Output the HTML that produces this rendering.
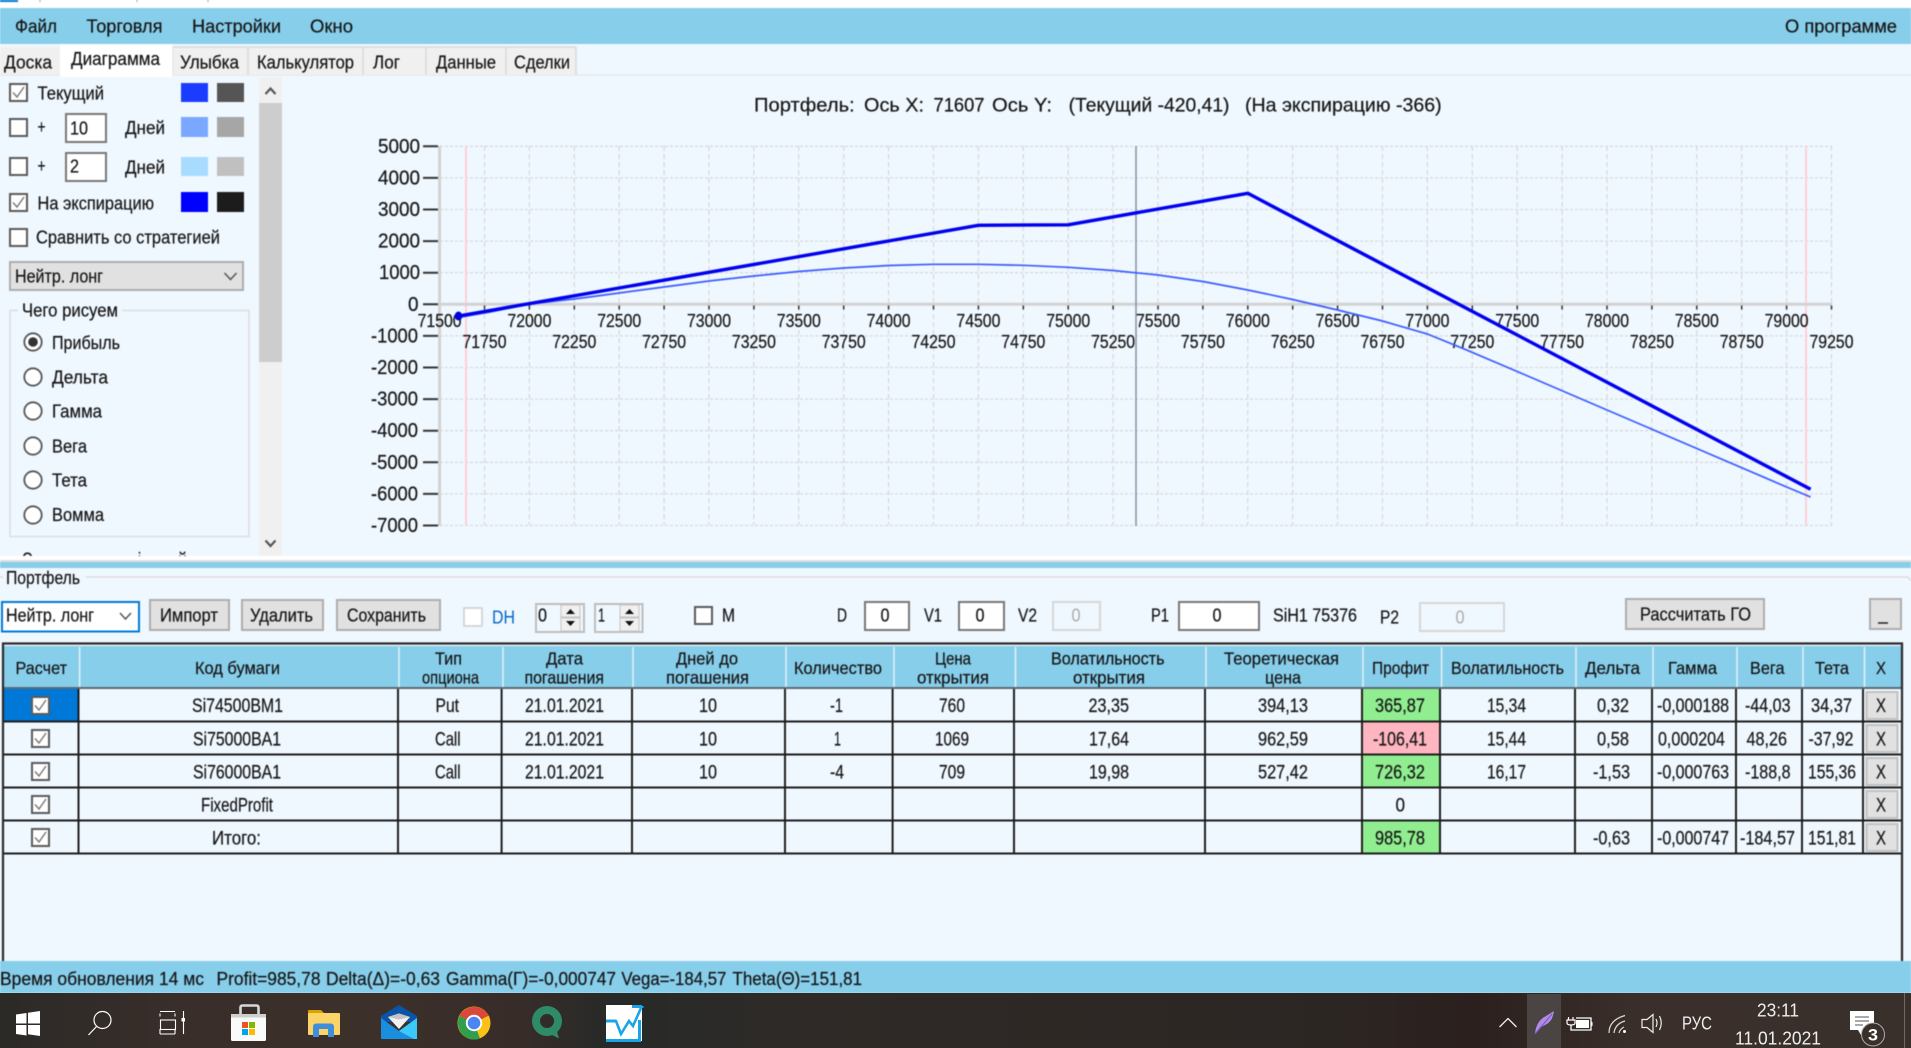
<!DOCTYPE html>
<html lang="ru"><head><meta charset="utf-8"><title>Портфель</title>
<style>
html,body{margin:0;padding:0;width:1911px;height:1048px;overflow:hidden;background:#f0f8ff}
svg{display:block}
text{font-family:"Liberation Sans","DejaVu Sans",sans-serif;fill:#161616;font-size:18px;white-space:pre}
.app{filter:blur(.5px)}
.app text{stroke:#161616;stroke-width:.22px}
.c text{font-size:19.5px}
.h text{font-size:17.5px}
.w text{fill:#eee;font-size:18px}
</style></head><body>
<svg width="1911" height="1048" viewBox="0 0 1911 1048" xmlns="http://www.w3.org/2000/svg">
<defs>
<linearGradient id="tb" x1="0" x2="1" y1="0" y2="0">
<stop offset="0" stop-color="#2b2a27"/><stop offset=".1" stop-color="#3a2e2a"/><stop offset=".2" stop-color="#3c302b"/><stop offset=".27" stop-color="#382c29"/><stop offset=".32" stop-color="#272a28"/><stop offset=".42" stop-color="#2f2a27"/><stop offset=".7" stop-color="#2c2623"/><stop offset=".77" stop-color="#2b201d"/><stop offset=".86" stop-color="#3a2f2b"/><stop offset="1" stop-color="#3a302b"/>
</linearGradient>
<g id="cb"><rect x="1" y="1" width="17" height="17" fill="#fff" stroke="#5a5a5a" stroke-width="2"/></g>
<g id="ck"><rect x="1" y="1" width="17" height="17" fill="#fff" stroke="#5a5a5a" stroke-width="2"/><path d="M4 9.5l4 4.5 7-10" fill="none" stroke="#777" stroke-width="1.4"/></g>
<g id="rd"><circle r="8.7" fill="#fff" stroke="#555" stroke-width="1.8"/></g>
<g id="xb"><rect x="1" y="1" width="31" height="27" fill="#e1e1e1" stroke="#c0c0c0" stroke-width="2"/></g>
</defs>
<rect width="1911" height="1048" fill="#f0f8ff"/>
<g class="app">
<!-- title bar -->
<rect width="1911" height="8" fill="#fff"/>
<rect width="18" height="2" fill="#0078d7"/>
<path d="M40 0v2M137 0v2M208 0v2" stroke="#999"/>
<!-- menu -->
<rect y="8" width="1911" height="36" fill="#87ceeb"/>
<text x="15" y="32.5" textLength="42" lengthAdjust="spacingAndGlyphs">Файл</text>
<text x="86.5" y="32.5" textLength="76" lengthAdjust="spacingAndGlyphs">Торговля</text>
<text x="192" y="32.5" textLength="89" lengthAdjust="spacingAndGlyphs">Настройки</text>
<text x="310" y="32.5" textLength="43" lengthAdjust="spacingAndGlyphs">Окно</text>
<text x="1785" y="32.5" textLength="112" lengthAdjust="spacingAndGlyphs">О программе</text>
<!-- tabs -->
<path d="M0 75H1911" stroke="#e3e7ea" stroke-width="1.5"/>
<rect x="0" y="47" width="60" height="28" fill="#f0f0f0"/>
<rect x="172" y="47" width="404" height="28" fill="#f0f0f0"/>
<path d="M172.5 47V75M248 47V75M363 47V75M426 47V75M506 47V75M576 47V75M172 47H576" stroke="#d9d9d9" stroke-width="1.5" fill="none"/>
<rect x="60" y="44" width="112.500" height="33" fill="#fff"/>
<text x="4" y="68.500" textLength="48" lengthAdjust="spacingAndGlyphs">Доска</text>
<text x="71" y="65" textLength="89" lengthAdjust="spacingAndGlyphs">Диаграмма</text>
<text x="180" y="68.500" textLength="59" lengthAdjust="spacingAndGlyphs">Улыбка</text>
<text x="257" y="68.500" textLength="97" lengthAdjust="spacingAndGlyphs">Калькулятор</text>
<text x="373" y="68.500" textLength="27" lengthAdjust="spacingAndGlyphs">Лог</text>
<text x="436" y="68.500" textLength="60" lengthAdjust="spacingAndGlyphs">Данные</text>
<text x="514" y="68.500" textLength="56" lengthAdjust="spacingAndGlyphs">Сделки</text>
<!-- left panel -->
<use href="#ck" x="9" y="83"/><text x="37.500" y="99.300" textLength="66.500" lengthAdjust="spacingAndGlyphs">Текущий</text>
<rect x="181" y="83" width="27" height="19" fill="#1a3cff"/><rect x="217" y="83" width="27" height="19" fill="#555"/>
<use href="#cb" x="9" y="118"/><text x="37.500" y="133" textLength="8" lengthAdjust="spacingAndGlyphs">+</text>
<rect x="66" y="114" width="40" height="28" fill="#fff" stroke="#777" stroke-width="2"/><text x="70" y="134.300" textLength="18" lengthAdjust="spacingAndGlyphs">10</text>
<text x="125" y="134" textLength="40" lengthAdjust="spacingAndGlyphs">Дней</text>
<rect x="181" y="117" width="27" height="20" fill="#7aa7ff"/><rect x="217" y="117" width="27" height="20" fill="#a6a6a6"/>
<use href="#cb" x="9" y="157"/><text x="37.500" y="172" textLength="8" lengthAdjust="spacingAndGlyphs">+</text>
<rect x="66" y="153" width="40" height="28" fill="#fff" stroke="#777" stroke-width="2"/><text x="70" y="172.700" textLength="9" lengthAdjust="spacingAndGlyphs">2</text>
<text x="125" y="173.300" textLength="40" lengthAdjust="spacingAndGlyphs">Дней</text>
<rect x="181" y="157" width="27" height="19" fill="#a8dcff"/><rect x="217" y="157" width="27" height="19" fill="#c0c0c0"/>
<use href="#ck" x="9" y="193"/><text x="37.500" y="209.300" textLength="116.500" lengthAdjust="spacingAndGlyphs">На экспирацию</text>
<rect x="181" y="192" width="27" height="20" fill="#0000ff"/><rect x="217" y="192" width="27" height="20" fill="#1c1c1c"/>
<use href="#cb" x="9" y="228"/><text x="36" y="243.300" textLength="184" lengthAdjust="spacingAndGlyphs">Сравнить со стратегией</text>
<rect x="10" y="262" width="233" height="28" fill="#e1e1e1" stroke="#adadad" stroke-width="2"/>
<text x="15" y="282.700" textLength="88" lengthAdjust="spacingAndGlyphs">Нейтр. лонг</text>
<path d="M224.500 273l6 6.500 6-6.500" fill="none" stroke="#555" stroke-width="1.500"/>
<path d="M18 310.500H10V536.500H249V310.500H122" fill="none" stroke="#dcdcdc" stroke-width="1.500"/>
<text x="22" y="316.700" textLength="96" lengthAdjust="spacingAndGlyphs">Чего рисуем</text>
<use href="#rd" x="33" y="342"/><circle cx="33" cy="342" r="4.800" fill="#333"/><text x="52" y="349" textLength="68" lengthAdjust="spacingAndGlyphs">Прибыль</text>
<use href="#rd" x="33" y="377"/><text x="52" y="383.300" textLength="56" lengthAdjust="spacingAndGlyphs">Дельта</text>
<use href="#rd" x="33" y="411"/><text x="52" y="417.300" textLength="50" lengthAdjust="spacingAndGlyphs">Гамма</text>
<use href="#rd" x="33" y="446"/><text x="52" y="452.300" textLength="35" lengthAdjust="spacingAndGlyphs">Вега</text>
<use href="#rd" x="33" y="480"/><text x="52" y="486.700" textLength="35" lengthAdjust="spacingAndGlyphs">Тета</text>
<use href="#rd" x="33" y="515"/><text x="52" y="521" textLength="52" lengthAdjust="spacingAndGlyphs">Вомма</text>
<clipPath id="cl"><rect x="0" y="540" width="259" height="16"/></clipPath>
<g clip-path="url(#cl)"><text x="22" y="565.500" textLength="11" lengthAdjust="spacingAndGlyphs">О</text><text x="138" y="565.500" textLength="3" lengthAdjust="spacingAndGlyphs">і</text><text x="178" y="565.500" textLength="9" lengthAdjust="spacingAndGlyphs">й</text></g>
<!-- scrollbar -->
<rect x="259" y="77" width="23" height="479" fill="#f0f0f0"/>
<rect x="259" y="103" width="23" height="259" fill="#cdcdcd"/>
<path d="M265.500 94l5-5.500 5 5.500M265.500 540.500l5 5.500 5-5.500" fill="none" stroke="#555" stroke-width="2.200"/>
<!-- chart -->
<g style="font-size:19.5px">
<text x="754" y="111.700" style="font-size:19.5px" textLength="100.700" lengthAdjust="spacingAndGlyphs">Портфель:</text>
<text x="864" y="111.700" style="font-size:19.5px" textLength="60" lengthAdjust="spacingAndGlyphs">Ось X:</text>
<text x="933.500" y="111.700" style="font-size:19.5px" textLength="51" lengthAdjust="spacingAndGlyphs">71607</text>
<text x="992" y="111.700" style="font-size:19.5px" textLength="60" lengthAdjust="spacingAndGlyphs">Ось Y:</text>
<text x="1068.600" y="111.700" style="font-size:19.5px" textLength="160.900" lengthAdjust="spacingAndGlyphs">(Текущий -420,41)</text>
<text x="1245" y="111.700" style="font-size:19.5px" textLength="196.600" lengthAdjust="spacingAndGlyphs">(На экспирацию -366)</text>
</g>
<path d="M484.500 146V525M529.400 146V525M574.300 146V525M619.200 146V525M664.100 146V525M709 146V525M753.900 146V525M798.800 146V525M843.700 146V525M888.600 146V525M933.500 146V525M978.400 146V525M1023.300 146V525M1068.200 146V525M1113.100 146V525M1158 146V525M1202.900 146V525M1247.800 146V525M1292.700 146V525M1337.600 146V525M1382.500 146V525M1427.400 146V525M1472.300 146V525M1517.200 146V525M1562.100 146V525M1607 146V525M1651.900 146V525M1696.800 146V525M1741.700 146V525M1786.600 146V525M1831.500 146V525" stroke="#d9d9d9" stroke-width="1.300" stroke-dasharray="5 3" fill="none"/>
<path d="M440 146.300H1832M440 177.900H1832M440 209.500H1832M440 241.100H1832M440 272.700H1832M440 335.900H1832M440 367.500H1832M440 399.100H1832M440 430.700H1832M440 462.300H1832M440 493.900H1832M440 525.500H1832" stroke="#d9d9d9" stroke-width="1.300" stroke-dasharray="3 2" fill="none"/>
<path d="M466 146V525M1806 146V525" stroke="#ffcfd6" stroke-width="2"/>
<path d="M439.600 146V526" stroke="#d2d2d2" stroke-width="3"/>
<path d="M438 304.300H1832" stroke="#d2d2d2" stroke-width="3"/>
<path d="M484.500 305.500v4M529.400 305.500v4M574.300 305.500v4M619.200 305.500v4M664.100 305.500v4M709 305.500v4M753.900 305.500v4M798.800 305.500v4M843.700 305.500v4M888.600 305.500v4M933.500 305.500v4M978.400 305.500v4M1023.300 305.500v4M1068.200 305.500v4M1113.100 305.500v4M1158 305.500v4M1202.900 305.500v4M1247.800 305.500v4M1292.700 305.500v4M1337.600 305.500v4M1382.500 305.500v4M1427.400 305.500v4M1472.300 305.500v4M1517.200 305.500v4M1562.100 305.500v4M1607 305.500v4M1651.900 305.500v4M1696.800 305.500v4M1741.700 305.500v4M1786.600 305.500v4M1831.500 305.500v4" stroke="#333" stroke-width="1.500"/>
<path d="M423 146.300H438M423 177.900H438M423 209.500H438M423 241.100H438M423 272.700H438M423 304.300H438M423 335.900H438M423 367.500H438M423 399.100H438M423 430.700H438M423 462.300H438M423 493.900H438M423 525.500H438" stroke="#333" stroke-width="2"/>
<path d="M1136 146V526" stroke="#8492a6" stroke-width="1.500"/>
<g>
<text x="378" y="152.800" style="font-size:20px" textLength="42" lengthAdjust="spacingAndGlyphs">5000</text>
<text x="378" y="184.400" style="font-size:20px" textLength="42" lengthAdjust="spacingAndGlyphs">4000</text>
<text x="378" y="216" style="font-size:20px" textLength="42" lengthAdjust="spacingAndGlyphs">3000</text>
<text x="378" y="247.600" style="font-size:20px" textLength="42" lengthAdjust="spacingAndGlyphs">2000</text>
<text x="379" y="279.200" style="font-size:20px" textLength="41" lengthAdjust="spacingAndGlyphs">1000</text>
<text x="408" y="310.800" style="font-size:20px" textLength="10.500" lengthAdjust="spacingAndGlyphs">0</text>
<text x="371" y="342.400" style="font-size:20px" textLength="47" lengthAdjust="spacingAndGlyphs">-1000</text>
<text x="371" y="374" style="font-size:20px" textLength="47" lengthAdjust="spacingAndGlyphs">-2000</text>
<text x="371" y="405.600" style="font-size:20px" textLength="47" lengthAdjust="spacingAndGlyphs">-3000</text>
<text x="371" y="437.200" style="font-size:20px" textLength="47" lengthAdjust="spacingAndGlyphs">-4000</text>
<text x="371" y="468.800" style="font-size:20px" textLength="47" lengthAdjust="spacingAndGlyphs">-5000</text>
<text x="371" y="500.400" style="font-size:20px" textLength="47" lengthAdjust="spacingAndGlyphs">-6000</text>
<text x="371" y="532" style="font-size:20px" textLength="47" lengthAdjust="spacingAndGlyphs">-7000</text>
</g>
<g text-anchor="middle">
<text x="439.600" y="327" textLength="44" lengthAdjust="spacingAndGlyphs">71500</text>
<text x="529.400" y="327" textLength="44" lengthAdjust="spacingAndGlyphs">72000</text>
<text x="619.200" y="327" textLength="44" lengthAdjust="spacingAndGlyphs">72500</text>
<text x="709" y="327" textLength="44" lengthAdjust="spacingAndGlyphs">73000</text>
<text x="798.800" y="327" textLength="44" lengthAdjust="spacingAndGlyphs">73500</text>
<text x="888.600" y="327" textLength="44" lengthAdjust="spacingAndGlyphs">74000</text>
<text x="978.400" y="327" textLength="44" lengthAdjust="spacingAndGlyphs">74500</text>
<text x="1068.200" y="327" textLength="44" lengthAdjust="spacingAndGlyphs">75000</text>
<text x="1158" y="327" textLength="44" lengthAdjust="spacingAndGlyphs">75500</text>
<text x="1247.800" y="327" textLength="44" lengthAdjust="spacingAndGlyphs">76000</text>
<text x="1337.600" y="327" textLength="44" lengthAdjust="spacingAndGlyphs">76500</text>
<text x="1427.400" y="327" textLength="44" lengthAdjust="spacingAndGlyphs">77000</text>
<text x="1517.200" y="327" textLength="44" lengthAdjust="spacingAndGlyphs">77500</text>
<text x="1607" y="327" textLength="44" lengthAdjust="spacingAndGlyphs">78000</text>
<text x="1696.800" y="327" textLength="44" lengthAdjust="spacingAndGlyphs">78500</text>
<text x="1786.600" y="327" textLength="44" lengthAdjust="spacingAndGlyphs">79000</text>
<text x="484.500" y="348" textLength="44" lengthAdjust="spacingAndGlyphs">71750</text>
<text x="574.300" y="348" textLength="44" lengthAdjust="spacingAndGlyphs">72250</text>
<text x="664.100" y="348" textLength="44" lengthAdjust="spacingAndGlyphs">72750</text>
<text x="753.900" y="348" textLength="44" lengthAdjust="spacingAndGlyphs">73250</text>
<text x="843.700" y="348" textLength="44" lengthAdjust="spacingAndGlyphs">73750</text>
<text x="933.500" y="348" textLength="44" lengthAdjust="spacingAndGlyphs">74250</text>
<text x="1023.300" y="348" textLength="44" lengthAdjust="spacingAndGlyphs">74750</text>
<text x="1113.100" y="348" textLength="44" lengthAdjust="spacingAndGlyphs">75250</text>
<text x="1202.900" y="348" textLength="44" lengthAdjust="spacingAndGlyphs">75750</text>
<text x="1292.700" y="348" textLength="44" lengthAdjust="spacingAndGlyphs">76250</text>
<text x="1382.500" y="348" textLength="44" lengthAdjust="spacingAndGlyphs">76750</text>
<text x="1472.300" y="348" textLength="44" lengthAdjust="spacingAndGlyphs">77250</text>
<text x="1562.100" y="348" textLength="44" lengthAdjust="spacingAndGlyphs">77750</text>
<text x="1651.900" y="348" textLength="44" lengthAdjust="spacingAndGlyphs">78250</text>
<text x="1741.700" y="348" textLength="44" lengthAdjust="spacingAndGlyphs">78750</text>
<text x="1831.500" y="348" textLength="44" lengthAdjust="spacingAndGlyphs">79250</text>
</g>
<polyline points="458.500,317.500 490,312 529.400,304 574.300,299 619.200,293 664.100,287 709,281 753.900,276 798.800,271.500 843.700,268 888.600,265.500 933.500,264.300 978.400,264.300 1023.300,265.300 1068.200,267.300 1113.100,270.500 1158,275 1202.900,281.500 1247.800,290 1292.700,299.500 1337.600,310 1382.500,321 1427.400,334 1465,349.300 1517.200,371.500 1607,410 1696.800,448.500 1786.600,487 1810.600,497" fill="none" stroke="#3a5cff" stroke-width="1.700" stroke-linejoin="round"/>
<polyline points="458.500,316 978.400,225.300 1068.200,224.800 1247.800,193.300 1810.600,489.300" fill="none" stroke="#0000ee" stroke-width="3.400" stroke-linejoin="round"/>
<ellipse cx="458.500" cy="316" rx="3.800" ry="4.500" fill="#0000dd"/>
<!-- splitter -->
<rect y="556" width="1911" height="4" fill="#fff"/><rect y="560" width="1911" height="2" fill="#dedede"/>
<rect y="562" width="1911" height="6" fill="#87ceeb"/>
<!-- portfolio toolbar -->
<path d="M0 577H3M86 577H1906q4 0 4 4" fill="none" stroke="#dcdcdc" stroke-width="1.500"/>
<text x="6" y="584" textLength="74" lengthAdjust="spacingAndGlyphs">Портфель</text>
<rect x="2" y="602" width="137" height="29.500" fill="#fff" stroke="#0078d7" stroke-width="2"/>
<text x="6" y="621.700" textLength="88" lengthAdjust="spacingAndGlyphs">Нейтр. лонг</text>
<path d="M120 613l5.500 6 5.500-6" fill="none" stroke="#555" stroke-width="1.500"/>
<rect x="150" y="600" width="79" height="30" fill="#e1e1e1" stroke="#adadad" stroke-width="2"/>
<text x="160" y="621.700" textLength="58" lengthAdjust="spacingAndGlyphs">Импорт</text>
<rect x="242" y="600" width="81" height="30" fill="#e1e1e1" stroke="#adadad" stroke-width="2"/>
<text x="250" y="621.700" textLength="63" lengthAdjust="spacingAndGlyphs">Удалить</text>
<rect x="337" y="600" width="103" height="30" fill="#e1e1e1" stroke="#adadad" stroke-width="2"/>
<text x="347" y="621.700" textLength="79" lengthAdjust="spacingAndGlyphs">Сохранить</text>
<rect x="464" y="608" width="18" height="18" fill="#fff" stroke="#ccc" stroke-width="1.500"/>
<text x="492" y="623.300" textLength="23" lengthAdjust="spacingAndGlyphs" style="fill:#0066cc;stroke:none">DH</text>
<rect x="536" y="604" width="48" height="28" fill="#f0f8ff" stroke="#bdbdbd" stroke-width="2"/>
<text x="538" y="621.700" textLength="9" lengthAdjust="spacingAndGlyphs">0</text>
<rect x="561" y="605" width="19" height="12" fill="#f0f0f0" stroke="#c4c4c4"/><rect x="561" y="618" width="19" height="13" fill="#f0f0f0" stroke="#c4c4c4"/>
<path d="M566 614h9l-4.500-5zM566 621h9l-4.500 5z" fill="#111"/>
<rect x="595" y="604" width="47.500" height="28" fill="#f0f8ff" stroke="#bdbdbd" stroke-width="2"/>
<text x="598" y="621.700" textLength="7" lengthAdjust="spacingAndGlyphs">1</text>
<rect x="620" y="605" width="19" height="12" fill="#f0f0f0" stroke="#c4c4c4"/><rect x="620" y="618" width="19" height="13" fill="#f0f0f0" stroke="#c4c4c4"/>
<path d="M625 614h9l-4.500-5zM625 621h9l-4.500 5z" fill="#111"/>
<use href="#cb" x="694" y="606"/><text x="722" y="621.700" textLength="13" lengthAdjust="spacingAndGlyphs">M</text>
<text x="837" y="621.700" textLength="10" lengthAdjust="spacingAndGlyphs">D</text>
<rect x="865" y="602" width="44" height="28" fill="#fff" stroke="#777" stroke-width="2"/><text x="880.500" y="621.700" textLength="9" lengthAdjust="spacingAndGlyphs">0</text>
<text x="924" y="621.700" textLength="18" lengthAdjust="spacingAndGlyphs">V1</text>
<rect x="959" y="602" width="45" height="28" fill="#fff" stroke="#777" stroke-width="2"/><text x="975.500" y="621.700" textLength="9" lengthAdjust="spacingAndGlyphs">0</text>
<text x="1018" y="621.700" textLength="19" lengthAdjust="spacingAndGlyphs">V2</text>
<rect x="1053" y="602" width="47" height="28" fill="#f0f8ff" stroke="#d6d6d6" stroke-width="2"/><text x="1071.500" y="621.700" textLength="9" lengthAdjust="spacingAndGlyphs" style="fill:#aaa;stroke:none">0</text>
<text x="1151" y="621.700" textLength="18" lengthAdjust="spacingAndGlyphs">P1</text>
<rect x="1179" y="602" width="80" height="28" fill="#fff" stroke="#777" stroke-width="2"/><text x="1212.500" y="621.700" textLength="9" lengthAdjust="spacingAndGlyphs">0</text>
<text x="1273" y="621.700" textLength="84" lengthAdjust="spacingAndGlyphs">SiH1 75376</text>
<text x="1380" y="623.300" textLength="19" lengthAdjust="spacingAndGlyphs">P2</text>
<rect x="1420" y="603" width="84" height="28" fill="#f0f8ff" stroke="#d6d6d6" stroke-width="2"/><text x="1455.500" y="623.300" textLength="9" lengthAdjust="spacingAndGlyphs" style="fill:#aaa;stroke:none">0</text>
<rect x="1626" y="599" width="138" height="30" fill="#e1e1e1" stroke="#adadad" stroke-width="2"/>
<text x="1640" y="620.700" textLength="111" lengthAdjust="spacingAndGlyphs">Рассчитать ГО</text>
<rect x="1870" y="599" width="31" height="30" fill="#e1e1e1" stroke="#adadad" stroke-width="2"/>
<path d="M1878 623h10" stroke="#222" stroke-width="1.500"/>
<!-- grid header -->
<rect x="4" y="646" width="1897" height="41" fill="#87ceeb"/>
<path d="M79.600 647V687M399 647V687M503 647V687M633 647V687M786 647V687M894 647V687M1015.500 647V687M1206 647V687M1363 647V687M1441.600 647V687M1576 647V687M1653 647V687M1737 647V687M1803 647V687M1864.500 647V687" stroke="#e4f2f8" stroke-width="1.500"/>
<rect x="1363" y="689" width="77" height="32" fill="#90ee90"/><rect x="1363" y="722" width="77" height="32" fill="#ffb6c1"/><rect x="1363" y="755" width="77" height="32" fill="#90ee90"/><rect x="1363" y="821" width="77" height="32" fill="#90ee90"/>
<rect x="4" y="689" width="74" height="32" fill="#0078d7"/>
<path d="M78.500 688V853M398 688V853M501.600 688V853M632 688V853M785 688V853M892.600 688V853M1014 688V853M1205 688V853M1362 688V853M1440 688V853M1575 688V853M1652 688V853M1736 688V853M1802 688V853M1863 688V853" stroke="#151515" stroke-width="1.900"/>
<path d="M3 721.500H1902M3 754.500H1902M3 787.500H1902M3 820.500H1902M3 853.500H1902" stroke="#1c1c1c" stroke-width="2"/>
<path d="M3 688H1902" stroke="#5a6a72" stroke-width="2"/>
<path d="M3 961V643.500H1902V961" fill="none" stroke="#2a2a2a" stroke-width="2.200"/>
<g class="h">
<text x="15.500" y="674" textLength="51.500" lengthAdjust="spacingAndGlyphs">Расчет</text>
<text x="195" y="674" textLength="85" lengthAdjust="spacingAndGlyphs">Код бумаги</text>
<text x="435" y="664.500" textLength="27" lengthAdjust="spacingAndGlyphs">Тип</text>
<text x="422" y="683.500" textLength="57" lengthAdjust="spacingAndGlyphs">опциона</text>
<text x="546" y="664.500" textLength="37" lengthAdjust="spacingAndGlyphs">Дата</text>
<text x="524.500" y="683.500" textLength="79.500" lengthAdjust="spacingAndGlyphs">погашения</text>
<text x="676" y="664.500" textLength="62" lengthAdjust="spacingAndGlyphs">Дней до</text>
<text x="666" y="683.500" textLength="83" lengthAdjust="spacingAndGlyphs">погашения</text>
<text x="794" y="674" textLength="88" lengthAdjust="spacingAndGlyphs">Количество</text>
<text x="935" y="664.500" textLength="36" lengthAdjust="spacingAndGlyphs">Цена</text>
<text x="917" y="683.500" textLength="72" lengthAdjust="spacingAndGlyphs">открытия</text>
<text x="1051" y="664.500" textLength="113.500" lengthAdjust="spacingAndGlyphs">Волатильность</text>
<text x="1073" y="683.500" textLength="72" lengthAdjust="spacingAndGlyphs">открытия</text>
<text x="1224" y="664.500" textLength="115" lengthAdjust="spacingAndGlyphs">Теоретическая</text>
<text x="1265" y="683.500" textLength="36" lengthAdjust="spacingAndGlyphs">цена</text>
<text x="1372" y="674" textLength="57" lengthAdjust="spacingAndGlyphs">Профит</text>
<text x="1451" y="674" textLength="113" lengthAdjust="spacingAndGlyphs">Волатильность</text>
<text x="1585" y="674" textLength="55" lengthAdjust="spacingAndGlyphs">Дельта</text>
<text x="1668" y="674" textLength="49" lengthAdjust="spacingAndGlyphs">Гамма</text>
<text x="1750" y="674" textLength="34.500" lengthAdjust="spacingAndGlyphs">Вега</text>
<text x="1815" y="674" textLength="34" lengthAdjust="spacingAndGlyphs">Тета</text>
<text x="1876" y="674" textLength="10" lengthAdjust="spacingAndGlyphs">X</text>
</g>
<!-- row checks -->
<use href="#ck" x="31" y="696"/><use href="#ck" x="31" y="729"/><use href="#ck" x="31" y="762"/><use href="#ck" x="31" y="795"/><use href="#ck" x="31" y="828"/>
<use href="#xb" x="1865.500" y="691"/><use href="#xb" x="1865.500" y="724"/><use href="#xb" x="1865.500" y="757"/><use href="#xb" x="1865.500" y="790"/><use href="#xb" x="1865.500" y="823"/>
<g class="c">
<!-- row 1 -->
<text x="192" y="712" textLength="91" lengthAdjust="spacingAndGlyphs">Si74500BM1</text>
<text x="435.500" y="712" textLength="23.500" lengthAdjust="spacingAndGlyphs">Put</text>
<text x="525" y="712" textLength="79" lengthAdjust="spacingAndGlyphs">21.01.2021</text>
<text x="699" y="712" textLength="18" lengthAdjust="spacingAndGlyphs">10</text>
<text x="830" y="712" textLength="13" lengthAdjust="spacingAndGlyphs">-1</text>
<text x="939" y="712" textLength="26" lengthAdjust="spacingAndGlyphs">760</text>
<text x="1088.500" y="712" textLength="40.500" lengthAdjust="spacingAndGlyphs">23,35</text>
<text x="1258" y="712" textLength="50" lengthAdjust="spacingAndGlyphs">394,13</text>
<text x="1375" y="712" textLength="50" lengthAdjust="spacingAndGlyphs">365,87</text>
<text x="1487" y="712" textLength="39" lengthAdjust="spacingAndGlyphs">15,34</text>
<text x="1597" y="712" textLength="32" lengthAdjust="spacingAndGlyphs">0,32</text>
<text x="1657" y="712" textLength="72" lengthAdjust="spacingAndGlyphs">-0,000188</text>
<text x="1745" y="712" textLength="45.500" lengthAdjust="spacingAndGlyphs">-44,03</text>
<text x="1811" y="712" textLength="41" lengthAdjust="spacingAndGlyphs">34,37</text>
<text x="1876" y="712" textLength="10" lengthAdjust="spacingAndGlyphs">X</text>
<!-- row 2 -->
<text x="193" y="745.500" textLength="88" lengthAdjust="spacingAndGlyphs">Si75000BA1</text>
<text x="435" y="745.500" textLength="25.500" lengthAdjust="spacingAndGlyphs">Call</text>
<text x="525" y="745.500" textLength="79" lengthAdjust="spacingAndGlyphs">21.01.2021</text>
<text x="699" y="745.500" textLength="18" lengthAdjust="spacingAndGlyphs">10</text>
<text x="834" y="745.500" textLength="7" lengthAdjust="spacingAndGlyphs">1</text>
<text x="935" y="745.500" textLength="34" lengthAdjust="spacingAndGlyphs">1069</text>
<text x="1089" y="745.500" textLength="40" lengthAdjust="spacingAndGlyphs">17,64</text>
<text x="1258" y="745.500" textLength="50" lengthAdjust="spacingAndGlyphs">962,59</text>
<text x="1373" y="745.500" textLength="54" lengthAdjust="spacingAndGlyphs">-106,41</text>
<text x="1487" y="745.500" textLength="39" lengthAdjust="spacingAndGlyphs">15,44</text>
<text x="1597" y="745.500" textLength="32" lengthAdjust="spacingAndGlyphs">0,58</text>
<text x="1658" y="745.500" textLength="67" lengthAdjust="spacingAndGlyphs">0,000204</text>
<text x="1746.500" y="745.500" textLength="40.500" lengthAdjust="spacingAndGlyphs">48,26</text>
<text x="1808.500" y="745.500" textLength="45" lengthAdjust="spacingAndGlyphs">-37,92</text>
<text x="1876" y="745.500" textLength="10" lengthAdjust="spacingAndGlyphs">X</text>
<!-- row 3 -->
<text x="193" y="778.500" textLength="88" lengthAdjust="spacingAndGlyphs">Si76000BA1</text>
<text x="435" y="778.500" textLength="25.500" lengthAdjust="spacingAndGlyphs">Call</text>
<text x="525" y="778.500" textLength="79" lengthAdjust="spacingAndGlyphs">21.01.2021</text>
<text x="699" y="778.500" textLength="18" lengthAdjust="spacingAndGlyphs">10</text>
<text x="830" y="778.500" textLength="14" lengthAdjust="spacingAndGlyphs">-4</text>
<text x="939" y="778.500" textLength="26" lengthAdjust="spacingAndGlyphs">709</text>
<text x="1089" y="778.500" textLength="40" lengthAdjust="spacingAndGlyphs">19,98</text>
<text x="1258" y="778.500" textLength="50" lengthAdjust="spacingAndGlyphs">527,42</text>
<text x="1375" y="778.500" textLength="50" lengthAdjust="spacingAndGlyphs">726,32</text>
<text x="1487" y="778.500" textLength="39" lengthAdjust="spacingAndGlyphs">16,17</text>
<text x="1593" y="778.500" textLength="37" lengthAdjust="spacingAndGlyphs">-1,53</text>
<text x="1657" y="778.500" textLength="72" lengthAdjust="spacingAndGlyphs">-0,000763</text>
<text x="1745" y="778.500" textLength="45.500" lengthAdjust="spacingAndGlyphs">-188,8</text>
<text x="1808" y="778.500" textLength="48" lengthAdjust="spacingAndGlyphs">155,36</text>
<text x="1876" y="778.500" textLength="10" lengthAdjust="spacingAndGlyphs">X</text>
<!-- row 4 -->
<text x="201" y="811.500" textLength="72" lengthAdjust="spacingAndGlyphs">FixedProfit</text>
<text x="1395.500" y="811.500" textLength="9.500" lengthAdjust="spacingAndGlyphs">0</text>
<text x="1876" y="811.500" textLength="10" lengthAdjust="spacingAndGlyphs">X</text>
<!-- row 5 -->
<text x="212" y="844.500" textLength="49" lengthAdjust="spacingAndGlyphs">Итого:</text>
<text x="1375" y="844.500" textLength="50" lengthAdjust="spacingAndGlyphs">985,78</text>
<text x="1593" y="844.500" textLength="37" lengthAdjust="spacingAndGlyphs">-0,63</text>
<text x="1657" y="844.500" textLength="72" lengthAdjust="spacingAndGlyphs">-0,000747</text>
<text x="1740" y="844.500" textLength="55" lengthAdjust="spacingAndGlyphs">-184,57</text>
<text x="1808" y="844.500" textLength="48" lengthAdjust="spacingAndGlyphs">151,81</text>
<text x="1876" y="844.500" textLength="10" lengthAdjust="spacingAndGlyphs">X</text>
</g>
<!-- status bar -->
<rect y="961" width="1911" height="32" fill="#87ceeb"/>
<text x="0" y="985" textLength="204" lengthAdjust="spacingAndGlyphs">Время обновления 14 мс</text>
<text x="216.500" y="985" textLength="104" lengthAdjust="spacingAndGlyphs">Profit=985,78</text>
<text x="326" y="985" textLength="114" lengthAdjust="spacingAndGlyphs">Delta(Δ)=-0,63</text>
<text x="446" y="985" textLength="170" lengthAdjust="spacingAndGlyphs">Gamma(Γ)=-0,000747</text>
<text x="621.400" y="985" textLength="105" lengthAdjust="spacingAndGlyphs">Vega=-184,57</text>
<text x="732.500" y="985" textLength="129.500" lengthAdjust="spacingAndGlyphs">Theta(Θ)=151,81</text>
</g>
<!-- taskbar -->
<rect y="993" width="1911" height="55" fill="url(#tb)"/>
<path d="M16 1014.500l10.500-1.500v10.500H16zM28 1012.800l12-1.800v12.500H28zM16 1025h10.500v10.500L16 1034zM28 1025h12v11l-12-1.700z" fill="#fff"/>
<circle cx="102.500" cy="1020" r="8.500" fill="none" stroke="#fff" stroke-width="1.200"/><path d="M96.500 1026.500L88.500 1035" stroke="#fff" stroke-width="1.200"/>
<path d="M160 1011.500h15M160 1016.500v-3M175 1016.500v-3M160 1034h15M160 1029v5M175 1029v5M183.500 1011v23" stroke="#fff" stroke-width="1.100" fill="none"/>
<rect x="160.500" y="1020" width="15" height="9.500" fill="none" stroke="#fff" stroke-width="1.100"/><rect x="181.500" y="1018" width="3.500" height="3.500" fill="#fff"/>
<!-- store -->
<path d="M240.500 1016v-8.500q0-2 2-2h14q2 0 2 2v8.500" fill="none" stroke="#d8d8d8" stroke-width="2.600"/>
<path d="M231 1014h35v25.500q0 1.500-1.500 1.500h-32q-1.500 0-1.500-1.500z" fill="#fafafa"/><rect x="231" y="1014" width="35" height="3.500" fill="#cfcfcf"/>
<rect x="242" y="1022" width="6" height="6" fill="#f25022"/><rect x="249" y="1022" width="6" height="6" fill="#7fba00"/><rect x="242" y="1029" width="6" height="6" fill="#00a4ef"/><rect x="249" y="1029" width="6" height="6" fill="#ffb900"/>
<!-- explorer -->
<path d="M308 1011q0-1 1-1h12l3 3v4h-16z" fill="#d9a200"/><rect x="308" y="1013" width="32" height="22" rx="1" fill="#fcd366"/>
<path d="M313 1037v-10q0-3.500 3.500-3.500h14q3.500 0 3.500 3.500v10h-6v-8h-9v8z" fill="#3f8edb"/>
<!-- mail -->
<path d="M381 1016l18-11 18 11v6h-36z" fill="#0b55a8"/>
<path d="M388 1017l11-3.500 11 3.500-11 12z" fill="#f2f2f2"/><path d="M388 1017l11-3.500 11 3.500-11 2.500z" fill="#c4c4c4"/>
<path d="M381 1018l18 13 18-13v20q0 1-1 1h-34q-1 0-1-1z" fill="#1a8fe0"/><path d="M417 1018v21h-3l-15-8z" fill="#3cc8f8"/>
<!-- chrome -->
<circle cx="474" cy="1023" r="16.500" fill="#fbc116"/>
<path d="M474 1023L459.500 1016A16.500 16.500 0 0 1 488.800 1015.500z" fill="#d9483a"/>
<path d="M474 1023L459.500 1016A16.500 16.500 0 0 0 480 1038.500z" fill="#2f9e4d"/>
<circle cx="474" cy="1023" r="8.200" fill="#fff"/><circle cx="474" cy="1023" r="6.300" fill="#4a85f0"/>
<!-- Q -->
<circle cx="547" cy="1021" r="11" fill="none" stroke="#2f8a68" stroke-width="8"/><path d="M552 1030l5 1.500 2 7-8-4z" fill="#2f8a68"/>
<!-- app icon -->
<rect x="606" y="1005" width="36" height="36" fill="#fff"/>
<path d="M632 1006.500h10M639.500 1020v20.500H606M606 1021h10M642 1006v2" stroke="#19a5e6" stroke-width="3" fill="none"/>
<polyline points="606,1021 616,1021 621,1034 629,1021 633,1026 641,1008" fill="none" stroke="#19a5e6" stroke-width="2.600"/>
<!-- tray -->
<path d="M1499.500 1027l8.500-8.500 8.500 8.500" fill="none" stroke="#f0f0f0" stroke-width="1.300"/>
<rect x="1527" y="994" width="34" height="54" fill="#4a4442"/>
<path d="M1535 1034q1-13 11-18l8-5q-1 6-3 9t-6 5q-5 2-10 9z" fill="#b08be6"/><path d="M1535 1034l17-20" stroke="#7a55c4"/>
<path d="M1568.500 1017v3M1573 1017v3M1567 1020h8v3q0 2-4 2t-4-2z" fill="none" stroke="#fff" stroke-width="1.200"/>
<path d="M1571 1025v5h20v-12h-15" fill="none" stroke="#fff" stroke-width="1.300"/><rect x="1576" y="1020" width="13" height="8" fill="#fff"/><rect x="1591" y="1022" width="1.500" height="4" fill="#fff"/>
<path d="M1609 1033q0-13 16-17.500M1614 1033q1-9 11-12M1619 1033q1-4 5-6" fill="none" stroke="#ddd" stroke-width="1.200"/><circle cx="1624.500" cy="1031.500" r="1.500" fill="#fff"/>
<path d="M1642 1019.500h5l6-5v18l-6-5h-5z" fill="none" stroke="#eee" stroke-width="1.200"/><path d="M1656 1019q2 4 0 8M1659.500 1016q3.500 7 0 14" fill="none" stroke="#eee" stroke-width="1.200"/>
<g class="w">
<text x="1682" y="1029.500" textLength="30" lengthAdjust="spacingAndGlyphs">РУС</text>
<text x="1757" y="1016.500" textLength="42" lengthAdjust="spacingAndGlyphs">23:11</text>
<text x="1735" y="1044.500" textLength="86" lengthAdjust="spacingAndGlyphs">11.01.2021</text>
</g>
<path d="M1850 1011h24v19h-9l-4 5-3-5h-8z" fill="#fff"/>
<path d="M1855 1017h14M1855 1021h14M1855 1025h8" stroke="#555" stroke-width="1"/>
<circle cx="1873" cy="1034.500" r="11.500" fill="#3a302b" stroke="#aaa" stroke-width="1"/>
<text x="1868" y="1040.500" textLength="10" lengthAdjust="spacingAndGlyphs" style="fill:#fff;font-weight:bold;font-size:17px">3</text>
<path d="M1904.500 993V1048" stroke="#6f6965"/>
</svg>
</body></html>
